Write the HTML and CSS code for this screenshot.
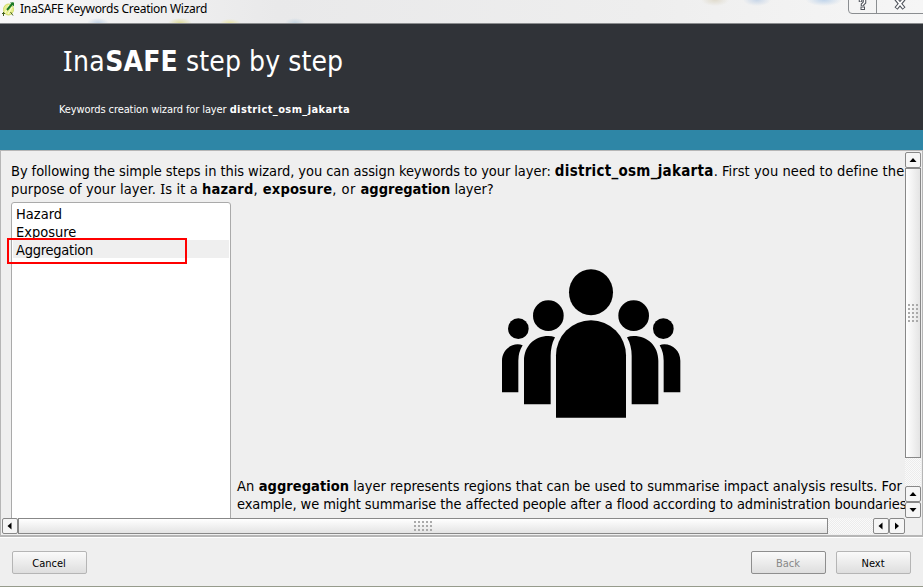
FILE: index.html
```html
<!DOCTYPE html>
<html lang="en">
<head>
<meta charset="utf-8">
<title>InaSAFE Keywords Creation Wizard</title>
<link rel="stylesheet" href="styles.css">
</head>
<body>
<div class="window">
  <div class="titlebar">
    <svg class="app-icon" viewBox="0 0 14 16" width="14" height="16">
      <ellipse cx="7.500" cy="8.500" rx="5" ry="5.500" fill="#e8f08e" stroke="#cfdc6a"/>
      <path d="M4 12L8 4M7 13L11 6" stroke="#f8fbd8"/>
      <path d="M6 9L12 2" stroke="#1c7a25" stroke-width="2"/>
      <path d="M9 1.500h4v4z" fill="#1c7a25"/>
      <path d="M2.500 11v4M1 12.500h3M9.500 11l2.500 3.500" stroke="#43621f" fill="none"/>
    </svg>
    <span class="caption">InaSAFE Keywords Creation Wizard</span>
    <div class="controls">
      <svg viewBox="0 0 75 14" width="75" height="14">
        <path d="M.5 0V10Q.5 13.500 4 13.500H75M28.500 0V13.500" fill="none" stroke="#8b8e91"/>
        <path d="M12.500 2V0M16.500 0V2.500L14.500 4.500V6" fill="none" stroke="#50545c" stroke-width="3.500"/>
        <path d="M12.500 1.500V0M16.500 0V2.500L14.500 4.500V5.500" fill="none" stroke="#fff" stroke-width="1.400"/>
        <rect x="13" y="7" width="3.500" height="2.500" fill="#fff" stroke="#50545c"/>
        <path d="M48 -1L56 8.500M56 -1L48 8.500" stroke="#50545c" stroke-width="4"/>
        <path d="M48.500 -.5L55.500 7.800M55.500 -.5L48.500 7.800" stroke="#fff" stroke-width="1.800"/>
      </svg>
    </div>
  </div>
  <header class="banner">
    <h1><span class="t1"><span class="cap-i">I</span>na</span><b class="t2">SAFE</b><span class="t3"> step by step</span></h1>
    <p class="subtitle"><span class="u1">Keywords creation wizard for layer </span><b class="u2">district_osm_jakarta</b></p>
  </header>
  <div class="stripe"></div>
  <main class="frame">
    <div class="viewport">
      <p class="intro"><span class="a1">By following the simple steps in this wizard, you can assign keywords to your layer: </span><b class="a2">district_osm_jakarta</b><span class="a3">. First you need to define the</span><br><span class="b1">purpose of your layer. <span class="cap-i">I</span>s it a </span><b class="b2">hazard</b><span class="sep">, </span><b class="b2">exposure</b><span class="sep">, or </span><b>aggregation</b><span class="b5"> layer?</span></p>
      <div class="columns">
        <ul class="list">
          <li>Hazard</li>
          <li>Exposure</li>
          <li class="selected">Aggregation</li>
        </ul>
        <section class="detail">
          <svg class="people" viewBox="0 0 660 510" width="220" height="170">
            <ellipse cx="333" cy="97" rx="66" ry="69"/>
            <circle cx="205" cy="167" r="46"/><circle cx="461" cy="167" r="46"/>
            <circle cx="115" cy="206" r="31"/><circle cx="550" cy="206" r="31"/>
            <path d="M228 473V286A105 105 0 0 1 438 286V473Z"/>
            <path d="M132 433V302C132 258 164 228 205 228Q216 228 225 232Q212 257 212 288V433Z"/>
            <path d="M535 433V302C535 258 503 228 461 228Q450 228 441 232Q455 257 455 288V433Z"/>
            <path d="M66 397V302C66 274 88 253 113 253Q121 253 128 256Q115 277 115 302V397Z"/>
            <path d="M601 397V302C601 274 579 253 553 253Q545 253 539 256Q551 277 551 302V397Z"/>
          </svg>
          <p class="description"><span class="d1">An </span><b class="d2">aggregation</b><span> layer represents regions that can be used to summarise impact analysis results. For</span><br><span class="e1">example, we might summarise the affected people after a flood according to administration boundaries</span></p>
        </section>
      </div>
      <div class="highlight"></div>
    </div>
    <div class="vscroll">
      <i class="arrow"><svg viewBox="0 0 16 16"><path d="M3.500 9L7 5L10.500 9Z"/></svg></i>
      <div class="handle"><i class="grip"></i></div>
      <div class="track"></div>
      <i class="arrow"><svg viewBox="0 0 16 16"><path d="M3.500 9L7 5L10.500 9Z"/></svg></i>
      <i class="arrow"><svg viewBox="0 0 16 16"><path d="M3.500 5L7 9L10.500 5Z"/></svg></i>
    </div>
    <div class="hscroll">
      <i class="arrow"><svg viewBox="0 0 16 16"><path d="M8.500 3.500L4.500 7L8.500 10.500Z"/></svg></i>
      <div class="handle"><i class="grip"></i></div>
      <div class="track"></div>
      <i class="arrow"><svg viewBox="0 0 16 16"><path d="M8.500 3.500L4.500 7L8.500 10.500Z"/></svg></i>
      <i class="arrow"><svg viewBox="0 0 16 16"><path d="M5 3.500L9 7L5 10.500Z"/></svg></i>
    </div>
  </main>
  <footer class="actions">
    <button class="cancel">Cancel</button>
    <button class="back" disabled>Back</button>
    <button>Next</button>
  </footer>
</div>
</body>
</html>
```
FILE: styles.css
```css
* { box-sizing: border-box; }
body { margin: 0; background: #efefef; color: #000; font-family: "DejaVu Sans Condensed", "DejaVu Sans", sans-serif; font-stretch: condensed; overflow: hidden; }
p, h1, ul { margin: 0; padding: 0; font-weight: normal; }
p, h1 { white-space: pre; }
.window { display: flex; flex-direction: column; width: 923px; height: 587px; border-bottom: 1px solid #969b8c; }
.window > * { flex: none; }
.titlebar {
  display: flex; height: 24px; padding-left: 1px; border-bottom: 1px solid #8a8c8e;
  background:
    radial-gradient(ellipse 11px 5px at 98px 23px, #c4d5e8, transparent),
    radial-gradient(ellipse 12px 5px at 180px 23px, #dfdc9a, transparent),
    radial-gradient(ellipse 11px 4px at 230px 23px, #ece6a8, transparent),
    radial-gradient(ellipse 10px 5px at 295px 23px, #c6d6e2, transparent),
    radial-gradient(ellipse 14px 6px at 715px 0, #e0dbcd, transparent),
    radial-gradient(ellipse 14px 6px at 757px 0, #c8d6e8, transparent),
    radial-gradient(ellipse 18px 6px at 824px 0, #c0d4ea, transparent),
    linear-gradient(90deg, #f8f8f8, #e9e9ea 30%, #eee 70%, #f6f6f6);
}
.app-icon { margin-top: 1px; }
.caption { height: 18px; margin-left: 5px; font: 12px/18px "Noto Sans", sans-serif; letter-spacing: -.28px; white-space: pre; }
.controls { margin-left: auto; }
.arrow svg { display: block; width: 16px; height: 16px; }
.controls svg { display: block; }
.banner { height: 106px; background: #303338; color: #fff; }
h1 { padding: 19px 0 0 63px; font-size: 28px; line-height: 38px; }
.cap-i { font-family: "Noto Sans", sans-serif; line-height: 1; }
.t1 { letter-spacing: .4px; }
.t2 { letter-spacing: .2px; }
.t3 { letter-spacing: .1px; }
.subtitle { padding: 22px 0 0 59px; font-size: 11px; line-height: 14px; }
.u1 { letter-spacing: -.1px; }
.u2 { letter-spacing: .4px; }
.stripe { height: 20px; background: #2e86a6; }
.frame { display: grid; grid-template: 366px 16px / 903px 16px; height: 387px; padding: 1px 0 0 1px; border: solid #b6b6b6; border-width: 1px 1px 2px; }
.viewport { position: relative; overflow: hidden; padding: 10px 0 0 9px; font-size: 14.5px; line-height: 18px; }
.intro { height: 36px; }
.a1 { letter-spacing: -.065px; }
.a2 { font-size: 15px; letter-spacing: .27px; }
.a3 { letter-spacing: .08px; }
.b1 { letter-spacing: .1px; }
.b2 { letter-spacing: .2px; }
.sep { letter-spacing: .5px; }
.b5 { letter-spacing: -.1px; }
.d1 { letter-spacing: .1px; }
.d2 { letter-spacing: .05px; }
.e1 { letter-spacing: -.09px; }
.columns { display: flex; margin-top: 4px; }
.list { flex: none; width: 220px; height: 330px; padding: 1px; border: 1px solid #aaa; border-radius: 3px; background: #fff; list-style: none; }
.list li { height: 18px; padding-left: 3px; line-height: 20px; }
.list .selected { background: #efefef; letter-spacing: -.25px; }
.detail { padding: 58px 0 0 6px; }
.people { display: block; margin-left: 243px; }
.description { padding-top: 47px; }
.highlight { position: absolute; left: 5px; top: 86px; width: 180px; height: 26px; border: 2px solid #f00; }
.vscroll, .hscroll { display: flex; }
.vscroll { flex-direction: column; }
.hscroll { grid-row: 2; }
.arrow { flex: none; width: 16px; height: 16px; border: 1px solid #888; border-radius: 2px; background: #f6f6f6; }
.handle { display: grid; place-items: center; border: 1px solid #888; background: linear-gradient(#fff, #e4e4e4); }
.track { flex: 1; background: repeating-conic-gradient(#ececec 0 25%, #fafafa 0 50%) 0 0 / 2px 2px; }
.vscroll .handle { height: 290px; background: linear-gradient(90deg, #fff, #e4e4e4); }
.hscroll .handle { width: 810px; }
.grip { width: 18px; height: 10px; background: radial-gradient(circle at 1px 1px, #aaa 1px, transparent 1.3px) 0 0 / 4px 4px; }
.vscroll .grip { width: 10px; height: 18px; }
.actions { display: flex; gap: 10px; height: 49px; padding: 13px 12px 0; border-top: 1px solid #fff; }
button { width: 75px; height: 23px; padding: 1px 1px 0 0; border: 1px solid #b5b5b5; border-radius: 2px; background: linear-gradient(#fafafa, #dedede); font: 11px "DejaVu Sans Condensed", sans-serif; color: #000; }
.cancel { margin-right: auto; }
.back { border-color: #8e8e8e; color: #888; }
```
